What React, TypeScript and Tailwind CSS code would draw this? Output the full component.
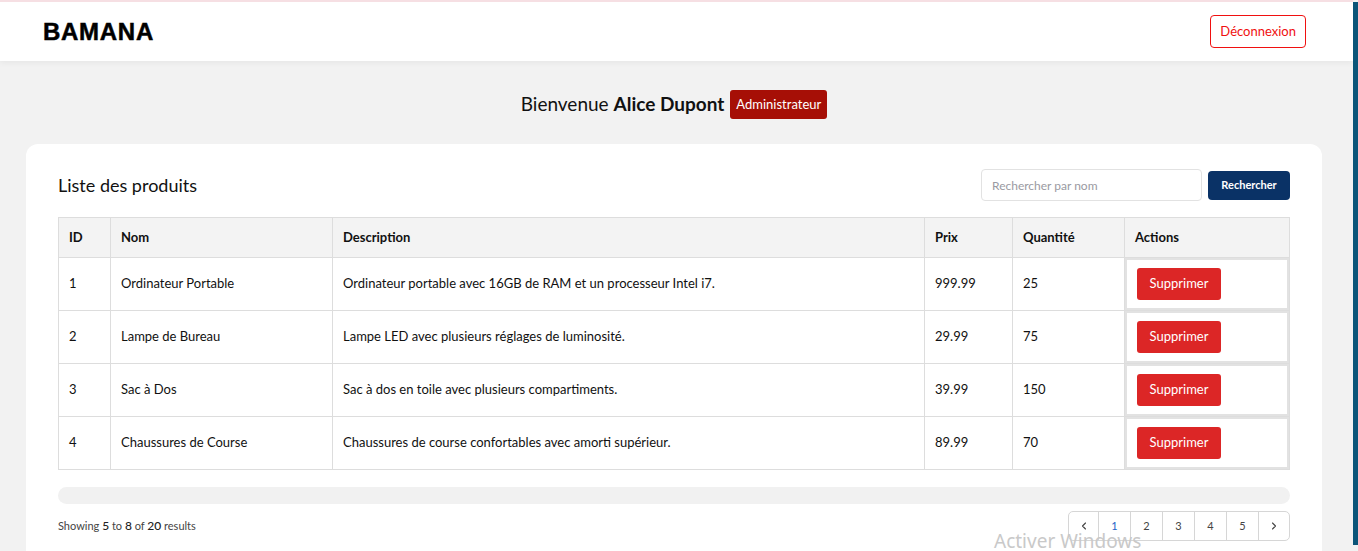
import { ChevronLeft, ChevronRight } from "lucide-react";

const products = [
  { id: 1, nom: "Ordinateur Portable", description: "Ordinateur portable avec 16GB de RAM et un processeur Intel i7.", prix: "999.99", quantite: 25 },
  { id: 2, nom: "Lampe de Bureau", description: "Lampe LED avec plusieurs réglages de luminosité.", prix: "29.99", quantite: 75 },
  { id: 3, nom: "Sac à Dos", description: "Sac à dos en toile avec plusieurs compartiments.", prix: "39.99", quantite: 150 },
  { id: 4, nom: "Chaussures de Course", description: "Chaussures de course confortables avec amorti supérieur.", prix: "89.99", quantite: 70 },
];

const font = "font-['Lato','Noto_Sans',sans-serif]";
const cell = "border border-[#dddddd] px-[10px] align-middle";

export default function App() {
  return (
    <div className={`relative flex h-[551px] w-full overflow-hidden bg-[#f2f2f2] ${font} text-[#111]`}>
      <div className="flex min-w-0 flex-1 flex-col">
        <header className="flex h-[61px] shrink-0 items-center justify-between border-t-2 border-[#f6dfe3] bg-white pl-[43px] pr-[47px] shadow-[0_2px_6px_rgba(0,0,0,0.05)]">
          <span className="font-['Liberation_Sans',Arial,sans-serif] text-[24px] font-bold tracking-[0.03em] text-black [-webkit-text-stroke:0.5px_black]">
            BAMANA
          </span>
          <button className="h-[33px] rounded-[4px] border border-[#f01010] px-[9px] text-[13px] text-[#f01010]">
            Déconnexion
          </button>
        </header>

        <main className="flex shrink-0 flex-col px-[26px] pr-[31px]">
          <div className="flex items-center justify-center gap-[6px] pt-[29px]">
            <span className="text-[19px]">
              Bienvenue <span className="font-bold">Alice Dupont</span>
            </span>
            <span className="flex h-[29px] items-center rounded-[3px] bg-[#a60f06] px-[6px] text-[13px] text-white">
              Administrateur
            </span>
          </div>

          <section className="mt-[25px] rounded-xl bg-white px-8 pb-10 pt-[25px]">
            <div className="flex items-center justify-between">
              <h2 className="text-[18px] text-[#111]">Liste des produits</h2>
              <div className="flex items-center gap-[6px]">
                <input
                  placeholder="Rechercher par nom"
                  className="h-[32px] w-[221px] rounded-[4px] border border-[#e2e2e2] px-[10px] text-[12px] text-[#333] placeholder:text-[#9a9aa2] outline-none"
                />
                <button className="h-[29px] w-[82px] rounded-[4px] bg-[#0a3266] text-[11px] font-bold text-white">
                  Rechercher
                </button>
              </div>
            </div>

            <table className="mt-4 w-full border-collapse text-left text-[13px]">
              <thead>
                <tr className="h-[40px] bg-[#f3f3f3] text-[13px] font-bold">
                  <th className={`${cell} w-[52px]`}>ID</th>
                  <th className={`${cell} w-[222px]`}>Nom</th>
                  <th className={cell}>Description</th>
                  <th className={`${cell} w-[88px]`}>Prix</th>
                  <th className={`${cell} w-[112px]`}>Quantité</th>
                  <th className={`${cell} w-[165px]`}>Actions</th>
                </tr>
              </thead>
              <tbody>
                {products.map((p) => (
                  <tr key={p.id} className="h-[52px]">
                    <td className={cell}>{p.id}</td>
                    <td className={cell}>{p.nom}</td>
                    <td className={cell}>{p.description}</td>
                    <td className={cell}>{p.prix}</td>
                    <td className={cell}>{p.quantite}</td>
                    <td className="border border-[#dddddd] p-0">
                      <div className="flex h-[52px] items-center border-2 border-[#e2e2e2] px-[10px]">
                        <button className="h-[32px] w-[84px] rounded-[3px] bg-[#dc2626] text-[13px] text-white">
                          Supprimer
                        </button>
                      </div>
                    </td>
                  </tr>
                ))}
              </tbody>
            </table>

            <div className="mt-[17px] h-[17px] w-full rounded-full bg-[#f1f1f1]" />

            <div className="mt-[7px] flex items-center justify-between">
              <p className="text-[11px] text-[#444]">
                Showing <span className="text-[12px] font-medium text-[#222]">5</span> to{" "}
                <span className="text-[12px] font-medium text-[#222]">8</span> of{" "}
                <span className="text-[12px] font-medium text-[#222]">20</span> results
              </p>
              <nav className="flex h-[30px] overflow-hidden rounded-[5px] border border-[#d6d6d6] text-[11px] text-[#444]">
                <button className="flex w-[30px] items-center justify-center border-r border-[#d6d6d6]">
                  <ChevronLeft className="h-[12px] w-[12px]" strokeWidth={2.2} />
                </button>
                {[1, 2, 3, 4, 5].map((n) => (
                  <button
                    key={n}
                    className={`flex w-[32px] items-center justify-center border-r border-[#d6d6d6] ${n === 1 ? "text-[#1d64c8]" : ""}`}
                  >
                    {n}
                  </button>
                ))}
                <button className="flex w-[30px] items-center justify-center">
                  <ChevronRight className="h-[12px] w-[12px]" strokeWidth={2.2} />
                </button>
              </nav>
            </div>
          </section>
        </main>
      </div>

      <div className="mt-[2px] mb-[6px] w-[5px] bg-[#0b5579]" />

      <span className="pointer-events-none absolute left-[994px] top-[528px] font-['Noto_Sans',sans-serif] text-[19px] leading-[26px] text-[#c9c9c9]">
        Activer Windows
      </span>
    </div>
  );
}
